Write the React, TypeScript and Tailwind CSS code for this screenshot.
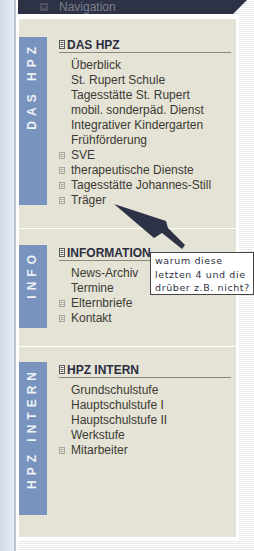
import React from "react";

type Item = { t: string; b: boolean };
type Section = {
  label: string;
  title: string;
  hCls: string;
  ptCls: string;
  boxCls: string;
  items: Item[];
};

const sections: Section[] = [
  {
    label: "DAS HPZ",
    title: "DAS HPZ",
    hCls: "h-[209px]",
    ptCls: "pt-[18px]",
    boxCls: "h-[168px]",
    items: [
      { t: "Überblick", b: false },
      { t: "St. Rupert Schule", b: false },
      { t: "Tagesstätte St. Rupert", b: false },
      { t: "mobil. sonderpäd. Dienst", b: false },
      { t: "Integrativer Kindergarten", b: false },
      { t: "Frühförderung", b: false },
      { t: "SVE", b: true },
      { t: "therapeutische Dienste", b: true },
      { t: "Tagesstätte Johannes-Still", b: true },
      { t: "Träger", b: true },
    ],
  },
  {
    label: "INFO",
    title: "INFORMATION",
    hCls: "h-[118px]",
    ptCls: "pt-[16px]",
    boxCls: "h-[83px]",
    items: [
      { t: "News-Archiv", b: false },
      { t: "Termine", b: false },
      { t: "Elternbriefe", b: true },
      { t: "Kontakt", b: true },
    ],
  },
  {
    label: "HPZ INTERN",
    title: "HPZ INTERN",
    hCls: "h-[189px]",
    ptCls: "pt-[15px]",
    boxCls: "h-[153px]",
    items: [
      { t: "Grundschulstufe", b: false },
      { t: "Hauptschulstufe I", b: false },
      { t: "Hauptschulstufe II", b: false },
      { t: "Werkstufe", b: false },
      { t: "Mitarbeiter", b: true },
    ],
  },
];

function DocIcon() {
  return (
    <svg width="6" height="9" viewBox="0 0 6 9" className="block">
      <rect x="0.5" y="0.5" width="5" height="8" fill="#f2f0ea" stroke="#5a5a58" />
      <line x1="1.5" y1="2.5" x2="4.5" y2="2.5" stroke="#5a5a58" />
      <line x1="1.5" y1="4.5" x2="4.5" y2="4.5" stroke="#5a5a58" />
      <line x1="1.5" y1="6.5" x2="4.5" y2="6.5" stroke="#5a5a58" />
    </svg>
  );
}

function Bullet() {
  return (
    <svg width="6" height="7" viewBox="0 0 6 7" className="block">
      <rect x="0.5" y="0.5" width="5" height="6" fill="none" stroke="#a8a69e" />
      <line x1="1.5" y1="2.5" x2="4.5" y2="2.5" stroke="#a8a69e" />
      <line x1="1.5" y1="4.5" x2="4.5" y2="4.5" stroke="#a8a69e" />
    </svg>
  );
}

const stripes =
  "[background-image:repeating-linear-gradient(to_bottom,#ffffff_0px,#ffffff_1px,#e9e9e9_1px,#e9e9e9_2px)]";

export default function App() {
  return (
    <div className="relative w-[254px] h-[551px] overflow-hidden bg-white flex font-['Liberation_Sans',Arial,sans-serif]">
      <div className="w-[14px] h-full bg-gradient-to-r from-[#d2dbe9] to-[#e6ecf4]" />
      <div className="w-[2px] h-full bg-[#b8c2d0]" />
      <div className="w-[2px] h-full bg-white" />
      <div className={`flex-1 h-full flex flex-col ${stripes}`}>
        {/* nav bar */}
        <div className="h-[14px] w-[229px] bg-[#2e3246] flex items-center [clip-path:polygon(0_0,100%_0,calc(100%_-_14px)_100%,0_100%)]">
          <div className="ml-[22px] w-[8px] h-[8px] bg-[#4e5160] flex items-center justify-center">
            <div className="w-0 h-0 border-l-[3px] border-r-[3px] border-t-[4px] border-l-transparent border-r-transparent border-t-[#2e3246]" />
          </div>
          <span className="ml-[11px] text-[12px] leading-none text-[#7c7f8c]">Navigation</span>
        </div>
        <div className="flex">
          <div className="w-[221px] h-[526px] bg-white pt-[5px]">
            <div className="ml-[1px] w-[217px] h-[518px] bg-[#e5e2d6] flex flex-col">
              {sections.map((s, si) => (
                <div
                  key={s.title}
                  className={`${s.hCls} ${s.ptCls} flex ${si > 0 ? "border-t border-white" : ""} box-border`}
                >
                  <div className={`w-[28px] ${s.boxCls} bg-[#7893bd] flex justify-center items-start pt-[5px]`}>
                    <span className="[writing-mode:vertical-rl] rotate-180 text-[12px] font-bold tracking-[5px] leading-none text-[#eef1f7] mr-[3px]">
                      {s.label}
                    </span>
                  </div>
                  <div className="ml-[12px] w-[172px] flex flex-col">
                    <div className="h-[16px] border-b border-[#8a877b] flex items-center box-border">
                      <DocIcon />
                      <span className="ml-[2px] text-[12px] font-bold text-[#2b2f40] leading-none">{s.title}</span>
                    </div>
                    <div className="mt-[5px] flex flex-col">
                      {s.items.map((it) => (
                        <div key={it.t} className="h-[15px] flex items-center">
                          <div className="w-[12px] flex items-center">{it.b ? <Bullet /> : null}</div>
                          <span className="text-[12px] leading-[15px] text-[#3b3a33] whitespace-nowrap">{it.t}</span>
                        </div>
                      ))}
                    </div>
                  </div>
                </div>
              ))}
            </div>
          </div>
        </div>
      </div>

      {/* arrow */}
      <svg className="absolute left-0 top-0" width="254" height="551" viewBox="0 0 254 551">
        <polygon
          points="114,204 166,221 168,228 185,245 182,249 162,233 154,238"
          fill="#2e3246"
        />
      </svg>

      {/* tooltip */}
      <div className="absolute left-[150px] top-[252px] w-[104px] h-[43px] bg-white border border-[#444] pl-[4px] pt-[1px] font-['DejaVu_Sans',Verdana,sans-serif] text-[9.5px] leading-[13.5px] tracking-[0.6px] text-[#2d3142] whitespace-nowrap">
        <div>warum diese</div>
        <div>letzten 4 und die</div>
        <div>drüber z.B. nicht?</div>
      </div>
    </div>
  );
}
